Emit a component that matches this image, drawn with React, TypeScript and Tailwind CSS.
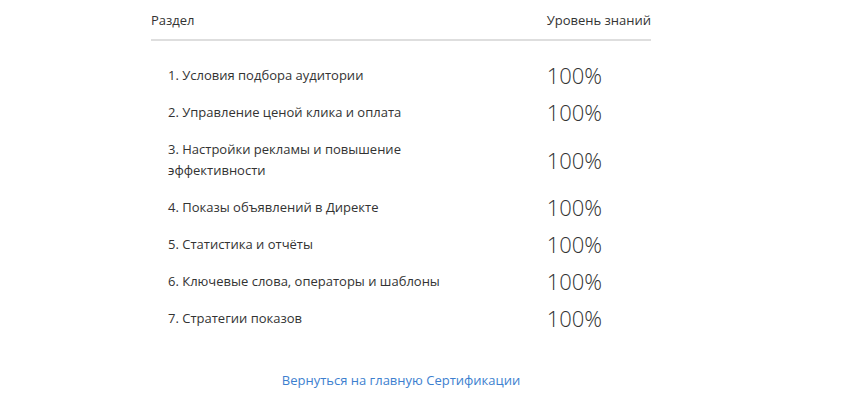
import React from "react";

const sections = [
  "1. Условия подбора аудитории",
  "2. Управление ценой клика и оплата",
  "3. Настройки рекламы и повышение эффективности",
  "4. Показы объявлений в Директе",
  "5. Статистика и отчёты",
  "6. Ключевые слова, операторы и шаблоны",
  "7. Стратегии показов",
];

export default function App() {
  return (
    <div className="min-h-screen bg-white font-['Open_Sans',sans-serif] text-[13px] text-[#333]">
      <div className="ml-[151px] w-[500px] pt-[12px]">
        <table className="w-full border-collapse">
          <thead>
            <tr className="border-b-2 border-[#dedede]">
              <th className="pb-[11px] text-left font-normal leading-[16px] whitespace-nowrap">Раздел</th>
              <th className="pb-[11px] text-right font-normal leading-[16px] whitespace-nowrap">Уровень знаний</th>
            </tr>
          </thead>
          <tbody>
            <tr>
              <td className="h-[17px]" colSpan={2}></td>
            </tr>
            {sections.map((title) => (
              <tr key={title}>
                <td className="py-[8px] pl-[17px] pr-[100px] align-middle leading-[21px]">{title}</td>
                <td className="w-[103px] py-[8px] align-middle text-[22px] font-light leading-[21px] text-[#333]">
                  100%
                </td>
              </tr>
            ))}
          </tbody>
        </table>
        <div className="mt-[34px] text-center">
          <a href="#" className="text-[#3d7fcf] leading-[16px]">
            Вернуться на главную Сертификации
          </a>
        </div>
      </div>
    </div>
  );
}
